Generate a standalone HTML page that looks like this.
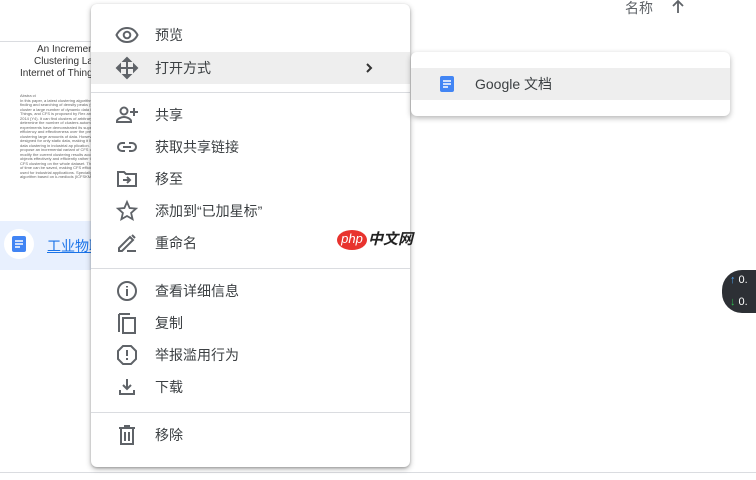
<!DOCTYPE html>
<html><head><meta charset="utf-8"><style>
body{margin:0;width:756px;height:480px;position:relative;overflow:hidden;background:#fff;font-family:"Liberation Sans","Noto Sans CJK SC",sans-serif;color:#3c4043}
.a{position:absolute}
.menu{position:absolute;left:91px;top:4px;width:319px;height:463px;background:#fff;border-radius:6px;box-shadow:0 2px 6px rgba(0,0,0,.3),0 1px 2px rgba(0,0,0,.2)}
.it{position:absolute;left:0;width:319px;height:32px;font-size:14px;line-height:32px}
.it span{position:absolute;left:64px}
.it svg{position:absolute;left:24px;top:4px}
.hl{background:#eeeeee}
.dv{position:absolute;left:0;width:319px;height:1px;background:#dadce0}
.sub{position:absolute;left:411px;top:52px;width:319px;height:64px;background:#fff;border-radius:6px;box-shadow:0 2px 6px rgba(0,0,0,.3)}
</style></head><body>
<div class="a" style="left:625px;top:0;font-size:14px;line-height:16px;color:#5f6368">名称</div>
<svg class="a" style="left:670px;top:0" width="16" height="14" viewBox="0 0 16 14"><path d="M8 1v12M3 6l5-5 5 5" stroke="#5f6368" stroke-width="1.8" fill="none"/></svg>
<div class="a" style="left:0;top:41px;width:100px;height:1px;background:#dadce0"></div>
<div class="a" style="left:20px;top:44px;width:80px;height:176px;overflow:hidden;font-size:10px;line-height:12px;color:#333;white-space:nowrap">
<div style="padding-left:17px">An Increment</div><div style="padding-left:14px">Clustering Lar</div><div>Internet of Things</div>
<div style="margin-top:14px;white-space:normal;width:110px;font-size:4px;line-height:4.5px;color:#666">Abstra ct<br>In this paper, a latest clustering algorithm based on fast finding and searching of density peaks (CFS) is improved to cluster a large number of dynamic data in industrial Internet of Things, and CFS is proposed by Rex and Laio in Science 2014 (Y4). It can find clusters of arbitrary shape and determine the number of clusters automatically. Some experiments have demonstrated its superiority in the efficiency and effectiveness over the previous algorithms for clustering large amounts of data. However, it is initially designed for only static data, making it limited for dynamic data clustering in industrial ap plication. This paper aims to propose an incremental variant of CFS clustering which can modify the current clustering results according to new arriving objects effectively and efficiently rather than to implement CFS clustering on the whole dataset. Therefore, a good deal of time can be saved, making CFS efficient enough to be used for industrial applications. Specially, an incremental CFS algorithm based on k-mediods (ICFSKM) is designed for</div>
</div>
<div class="a" style="left:0;top:221px;width:100px;height:49px;background:#e8f0fe"></div>
<div class="a" style="left:4px;top:229px;width:30px;height:30px;border-radius:50%;background:#fff"></div>
<svg class="a" style="left:11px;top:236px" width="16" height="16" viewBox="0 0 16 16"><rect x="1" y="0" width="14" height="16" rx="2" fill="#4285f4"/><path d="M4 5h8M4 8h8M4 11h5" stroke="#fff" stroke-width="1.5"/></svg>
<div class="a" style="left:47px;top:236px;font-size:14px;color:#1a73e8;text-decoration:underline">工业物联</div>
<div class="a" style="left:0;top:472px;width:756px;height:1px;background:#dadce0"></div>
<div class="a" style="left:722px;top:270px;width:40px;height:43px;border-radius:20px 0 0 20px;background:#2d3035"></div>
<div class="a" style="left:730px;top:274px;font-size:11px;color:#fff"><span style="color:#4aa3f0">↑</span> 0.</div>
<div class="a" style="left:730px;top:296px;font-size:11px;color:#fff"><span style="color:#2ebd4f">↓</span> 0.</div>

<div class="menu">
<div class="it" style="top:15px"><svg width="24" height="24" viewBox="0 0 24 24"><path d="M1.5 12C4 7 8 5 12 5s8 2 10.5 7C20 17 16 19 12 19s-8-2-10.5-7z" fill="none" stroke="#5f6368" stroke-width="2"/><circle cx="12" cy="12" r="3.3" fill="none" stroke="#5f6368" stroke-width="2"/></svg><span>预览</span></div>
<div class="it hl" style="top:48px"><svg width="24" height="24" viewBox="0 0 24 24"><path d="M12 2l-3 3h6zM12 22l-3-3h6zM2 12l3-3v6zM22 12l-3-3v6zM12 5v14M5 12h14" stroke="#5f6368" stroke-width="2" fill="#5f6368"/></svg><span>打开方式</span><svg style="left:270px;top:8px" width="16" height="16" viewBox="0 0 16 16"><path d="M6 4l4 4-4 4" stroke="#333" stroke-width="2" fill="none"/></svg></div>
<div class="dv" style="top:88px"></div>
<div class="it" style="top:95px"><svg width="24" height="24" viewBox="0 0 24 24"><circle cx="9" cy="8" r="3.5" fill="none" stroke="#5f6368" stroke-width="2"/><path d="M2 19v-1c0-2 4-4 7-4s7 2 7 4v1z" fill="none" stroke="#5f6368" stroke-width="2"/><path d="M19 5v8M15 9h8" stroke="#5f6368" stroke-width="2"/></svg><span>共享</span></div>
<div class="it" style="top:127px"><svg width="24" height="24" viewBox="0 0 24 24"><path d="M10 8H7a4 4 0 0 0 0 8h3M14 8h3a4 4 0 0 1 0 8h-3M8 12h8" fill="none" stroke="#5f6368" stroke-width="2"/></svg><span>获取共享链接</span></div>
<div class="it" style="top:159px"><svg width="24" height="24" viewBox="0 0 24 24"><path d="M3 5h6l2 2h10v12H3z" fill="none" stroke="#5f6368" stroke-width="2"/><path d="M8 13h7M12 10l3 3-3 3" fill="none" stroke="#5f6368" stroke-width="2"/></svg><span>移至</span></div>
<div class="it" style="top:191px"><svg width="24" height="24" viewBox="0 0 24 24"><path d="M12 3l2.6 6 6.4.6-4.9 4.3 1.5 6.3L12 17l-5.6 3.2 1.5-6.3L3 9.6l6.4-.6z" fill="none" stroke="#5f6368" stroke-width="1.8"/></svg><span>添加到“已加星标”</span></div>
<div class="it" style="top:223px"><svg width="24" height="24" viewBox="0 0 24 24"><path d="M4 20v-3L15 6l3 3L7 20zM17 4l3 3M12 20h9" fill="none" stroke="#5f6368" stroke-width="2"/></svg><span>重命名</span></div>
<div class="dv" style="top:264px"></div>
<div class="it" style="top:271px"><svg width="24" height="24" viewBox="0 0 24 24"><circle cx="12" cy="12" r="9" fill="none" stroke="#5f6368" stroke-width="2"/><path d="M12 10v7M12 7v1.5" stroke="#5f6368" stroke-width="2"/></svg><span>查看详细信息</span></div>
<div class="it" style="top:303px"><svg width="24" height="24" viewBox="0 0 24 24"><path d="M4 21V3" stroke="#5f6368" stroke-width="2"/><path d="M4 3h11" stroke="#5f6368" stroke-width="2"/><rect x="8" y="7" width="12" height="15" fill="none" stroke="#5f6368" stroke-width="2"/></svg><span>复制</span></div>
<div class="it" style="top:335px"><svg width="24" height="24" viewBox="0 0 24 24"><path d="M8 3h8l5 5v8l-5 5H8l-5-5V8z" fill="none" stroke="#5f6368" stroke-width="2"/><path d="M12 7v6M12 15v2" stroke="#5f6368" stroke-width="2"/></svg><span>举报滥用行为</span></div>
<div class="it" style="top:367px"><svg width="24" height="24" viewBox="0 0 24 24"><path d="M12 4v10M8 10l4 4 4-4M5 15v4h14v-4" fill="none" stroke="#5f6368" stroke-width="2"/></svg><span>下载</span></div>
<div class="dv" style="top:408px"></div>
<div class="it" style="top:415px"><svg width="24" height="24" viewBox="0 0 24 24"><path d="M4 5h16M9 3h6M6 5v16h12V5M10 9v9M14 9v9" fill="none" stroke="#5f6368" stroke-width="2"/></svg><span>移除</span></div>
</div>

<div class="sub">
<div class="it hl" style="top:16px"><svg style="left:28px;top:8px" width="16" height="16" viewBox="0 0 16 16"><rect x="1" y="0" width="14" height="16" rx="2" fill="#4285f4"/><path d="M4 5h8M4 8h8M4 11h5" stroke="#fff" stroke-width="1.5"/></svg><span>Google 文档</span></div>
</div>

<div class="a" style="left:337px;top:230px;width:30px;height:20px;border-radius:50%;background:#e8332e;color:#fff;font-size:13px;line-height:18px;text-align:center;font-style:italic;z-index:5">php</div>
<div class="a" style="left:368px;top:230px;font-size:15px;line-height:20px;color:#222;font-style:italic;font-weight:bold;z-index:5">中文网</div>
</body></html>
